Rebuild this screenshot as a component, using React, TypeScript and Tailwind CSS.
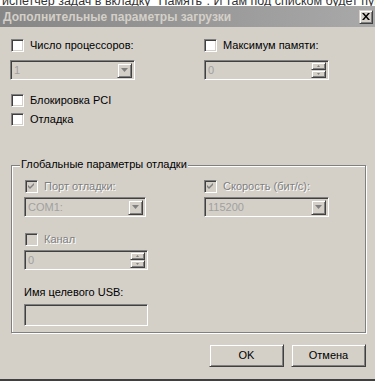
import React from "react"

const sunken =
  "border border-t-[#808080] border-l-[#808080] border-b-white border-r-white shadow-[inset_1px_1px_0_#404040,inset_-1px_-1px_0_#d4d0c8]"
const raised =
  "border border-t-[#d4d0c8] border-l-[#d4d0c8] border-b-[#404040] border-r-[#404040] shadow-[inset_1px_1px_0_#ffffff,inset_-1px_-1px_0_#808080] bg-[#d4d0c8]"

const disabledText = "text-[#808080] [text-shadow:1px_1px_0_#ffffff]"

const Check = ({
  label,
  checked = false,
  disabled = false,
}: {
  label: string
  checked?: boolean
  disabled?: boolean
}) => (
  <div className="flex items-center gap-[6px] h-[13px]">
    <div
      className={`w-[13px] h-[13px] flex items-center justify-center ${sunken} ${
        disabled ? "bg-[#d4d0c8]" : "bg-white"
      }`}
    >
      {checked && (
        <svg width="7" height="7" viewBox="0 0 7 7">
          <path
            d="M0 2 L2 4 L6 0 L6 2 L2 6 L0 4 Z"
            fill={disabled ? "#808080" : "#000"}
          />
        </svg>
      )}
    </div>
    <span className={`leading-none ${disabled ? disabledText : "text-black"}`}>
      {label}
    </span>
  </div>
)

const Combo = ({ value, width }: { value: string; width: string }) => (
  <div
    className={`${width} h-[20px] bg-[#d4d0c8] flex items-center justify-between pl-[3px] pr-[2px] ${sunken}`}
  >
    <span className="text-[#a0a0a0] leading-none">{value}</span>
    <div className={`w-[15px] h-[15px] flex items-center justify-center ${raised}`}>
      <svg width="7" height="4" viewBox="0 0 7 4">
        <path d="M0 0 H7 L3.5 4 Z" fill="#808080" />
      </svg>
    </div>
  </div>
)

const Spin = ({ value, width }: { value: string; width: string }) => (
  <div
    className={`${width} h-[20px] bg-[#d4d0c8] flex items-center justify-between pl-[3px] pr-[2px] ${sunken}`}
  >
    <span className="text-[#a0a0a0] leading-none">{value}</span>
    <div className="flex flex-col">
      <div className={`w-[15px] h-[8px] flex items-center justify-center ${raised}`}>
        <svg width="3" height="2" viewBox="0 0 3 2">
          <path d="M0 2 H3 L1.5 0 Z" fill="#808080" />
        </svg>
      </div>
      <div className={`w-[15px] h-[8px] flex items-center justify-center ${raised}`}>
        <svg width="3" height="2" viewBox="0 0 3 2">
          <path d="M0 0 H3 L1.5 2 Z" fill="#808080" />
        </svg>
      </div>
    </div>
  </div>
)

const Button = ({ label }: { label: string }) => (
  <div
    className={`w-[75px] h-[23px] flex items-center justify-center text-black ${raised}`}
  >
    {label}
  </div>
)

export default function App() {
  return (
    <div className="w-[375px] h-[381px] overflow-hidden bg-[#d4d0c8] flex flex-col text-[11px] font-['Liberation_Sans',Arial,sans-serif] border-b-2 border-b-[#404040]">
      <div className="h-[6px] bg-white overflow-hidden shrink-0">
        <div className="-mt-[8px] text-[12.5px] text-[#333] whitespace-nowrap pl-[2px]">
          испетчер задач в вкладку "Память". И там под списком будет пун
        </div>
      </div>
      <div className="h-[21px] shrink-0 bg-gradient-to-r from-[#868686] to-[#a9a9a9] flex items-center justify-between pl-[3px] pr-[2px]">
        <span className="text-[12px] font-bold text-[#d4d0c8] leading-none">
          Дополнительные параметры загрузки
        </span>
        <div className={`w-[14px] h-[14px] flex items-center justify-center ${raised}`}>
          <svg width="8" height="7" viewBox="0 0 8 7">
            <path d="M0 0 L2 0 L4 2.5 L6 0 L8 0 L5 3.5 L8 7 L6 7 L4 4.5 L2 7 L0 7 L3 3.5 Z" fill="#000" />
          </svg>
        </div>
      </div>

      <div className="flex flex-col pl-[10px] pt-[12px]">
        <div className="flex">
          <div className="w-[194px] flex flex-col gap-[8px]">
            <div className="pl-px">
              <Check label="Число процессоров:" />
            </div>
            <Combo value="1" width="w-[125px]" />
          </div>
          <div className="flex flex-col gap-[8px]">
            <Check label="Максимум памяти:" />
            <Spin value="0" width="w-[125px]" />
          </div>
        </div>

        <div className="flex flex-col gap-[6px] mt-[14px] pl-px">
          <Check label="Блокировка PCI" />
          <Check label="Отладка" />
        </div>

        <div className="relative mt-[39px] ml-px w-[355px] h-[168px] border border-[#808080] shadow-[inset_1px_1px_0_#ffffff,1px_1px_0_#ffffff] pt-[14px] pl-[12px]">
          <span className="absolute left-[8px] -top-[7px] bg-[#d4d0c8] px-px text-black leading-none">
            Глобальные параметры отладки
          </span>
          <div className="flex">
            <div className="w-[180px] flex flex-col">
              <div className="pl-px">
                <Check label="Порт отладки:" checked disabled />
              </div>
              <div className="mt-[4px]">
                <Combo value="COM1:" width="w-[122px]" />
              </div>
              <div className="mt-[16px] pl-px">
                <Check label="Канал" disabled />
              </div>
              <div className="mt-[4px]">
                <Spin value="0" width="w-[124px]" />
              </div>
              <span className="mt-[17px] text-black leading-none">
                Имя целевого USB:
              </span>
              <div className={`mt-[6px] w-[124px] h-[22px] bg-[#d4d0c8] ${sunken}`} />
            </div>
            <div className="flex flex-col">
              <Check label="Скорость (бит/с):" checked disabled />
              <div className="mt-[4px]">
                <Combo value="115200" width="w-[125px]" />
              </div>
            </div>
          </div>
        </div>

        <div className="flex justify-end gap-[7px] mt-[11px] pr-[9px]">
          <Button label="OK" />
          <Button label="Отмена" />
        </div>
      </div>
    </div>
  )
}
